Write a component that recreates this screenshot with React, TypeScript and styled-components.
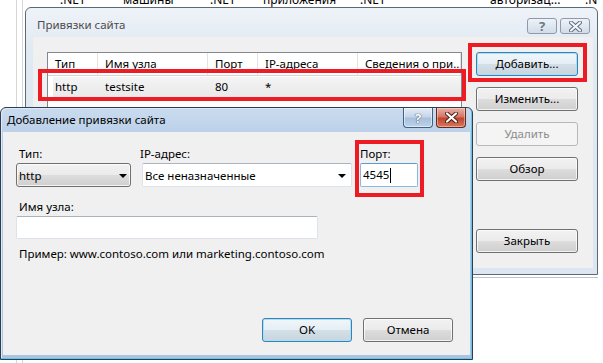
import styled, { createGlobalStyle, css } from 'styled-components';

const GlobalStyle = createGlobalStyle`
  html, body {
    margin: 0;
    padding: 0;
    background: #ffffff;
  }
  body {
    font-family: "Noto Sans", "Open Sans", sans-serif;
    font-size: 11.5px;
    color: #000000;
  }
`;

const Desktop = styled.div`
  position: relative;
  width: 603px;
  height: 363px;
  overflow: hidden;
  background: #ffffff;
  display: flex;
`;

const Gutter = styled.div<{ $w: number }>`
  width: ${p => p.$w}px;
  flex-shrink: 0;
  border-right: 1px solid #d6d6d6;
`;

const BackArea = styled.div`
  flex: 1;
`;

const BackRow = styled.div`
  display: flex;
  margin-top: -8px;
  padding-left: 37px;
  line-height: 16px;
  font-size: 12px;
  white-space: nowrap;
`;

const BackCell = styled.div<{ $w?: number }>`
  width: ${p => (p.$w ? `${p.$w}px` : 'auto')};
  flex-shrink: 0;
`;

const Window = styled.div<{ $x: number; $y: number; $w: number; $h: number; $active?: boolean }>`
  position: absolute;
  left: ${p => p.$x}px;
  top: ${p => p.$y}px;
  width: ${p => p.$w}px;
  height: ${p => p.$h}px;
  box-sizing: border-box;
  display: flex;
  flex-direction: column;
  border-radius: 6px 6px 0 0;
  ${p =>
    p.$active
      ? css`
          border: 1px solid #2d3d52;
          background: linear-gradient(#c9dbee, #b3cbe6 40px, #aac4e2);
          padding: 0 2px 4px 2px;
          box-shadow: inset -1px -1px 0 #62c6ea, inset 1px 1px 0 #dfeaf6;
        `
      : css`
          border: 1px solid #5d6877;
          background: linear-gradient(#eef3f8, #e1e9f2 40px, #dce6f1);
          padding: 0 4px 6px 7px;
          box-shadow: 0 2px 0 #ffffff, 0 3px 0 #bcc3cd;
        `}
`;

const TitleBar = styled.div<{ $active?: boolean }>`
  display: flex;
  align-items: flex-start;
  flex-shrink: 0;
  ${p =>
    p.$active
      ? css`
          height: 24px;
          padding: 0 4px 0 4px;
        `
      : css`
          height: 29px;
          padding: 0 3px 0 4px;
        `}
`;

const TitleText = styled.div<{ $active?: boolean }>`
  flex: 1;
  line-height: 16px;
  margin-top: ${p => (p.$active ? 4 : 9)}px;
  color: ${p => (p.$active ? '#000000' : '#4b4b4b')};
  white-space: nowrap;
`;

const Caption = styled.div<{ $active?: boolean }>`
  display: flex;
  gap: 3px;
  margin-top: ${p => (p.$active ? 0 : 10)}px;
`;

const CaptionButton = styled.div<{ $kind: 'help' | 'close'; $active?: boolean }>`
  box-sizing: border-box;
  width: 30px;
  height: ${p => (p.$active ? 20 : 16)}px;
  display: flex;
  align-items: center;
  justify-content: center;
  border-radius: ${p => (p.$active ? '0 0 4px 4px' : '3px')};
  font-weight: 700;
  font-size: 13px;
  ${p => {
    if (!p.$active) {
      return css`
        border: 1px solid #8d9aab;
        background: linear-gradient(#eef3f8, #dfe7f0 50%, #d3dde8);
        color: #6b7787;
      `;
    }
    if (p.$kind === 'close') {
      return css`
        border: 1px solid #5e2a22;
        border-top: none;
        background: linear-gradient(#e9b3a8, #d27866 45%, #c0462e 55%, #d9785f);
        box-shadow: inset 0 0 0 1px rgba(255, 220, 210, 0.5);
      `;
    }
    return css`
      border: 1px solid #43607f;
      border-top: none;
      background: linear-gradient(#e4edf7, #c5d6ea 45%, #a9c0dc 55%, #bcd3ec);
      box-shadow: inset 0 0 0 1px rgba(255, 255, 255, 0.5);
      color: #ffffff;
      text-shadow: 0 0 1px #2d4561, 0 0 1px #2d4561;
    `;
  }}
`;

const Client = styled.div<{ $dir: 'row' | 'column' }>`
  flex: 1;
  display: flex;
  flex-direction: ${p => p.$dir};
  background: #f0f0f0;
  min-height: 0;
`;

const BindingsBody = styled(Client)`
  padding: 15px 15px 15px 14px;
  gap: 14px;
`;

const ListView = styled.div`
  width: 415px;
  box-sizing: border-box;
  border: 1px solid #828790;
  background: #ffffff;
`;

const HeaderRow = styled.div`
  display: flex;
  height: 22px;
  border-bottom: 1px solid #d5d5d5;
`;

const HeaderCell = styled.div<{ $w?: number }>`
  width: ${p => (p.$w ? `${p.$w}px` : 'auto')};
  flex: ${p => (p.$w ? '0 0 auto' : '1')};
  box-sizing: border-box;
  padding: 2px 0 0 7px;
  line-height: 18px;
  border-right: 1px solid #e3e3e3;
  white-space: nowrap;
  overflow: hidden;
`;

const DataRow = styled.div`
  position: relative;
  display: flex;
  height: 20px;
  margin: 1px 0 0 5px;
  background: linear-gradient(#f4f4f4, #e9e9e9);

  &::after {
    content: '';
    position: absolute;
    top: -8px;
    left: -15px;
    right: -5px;
    bottom: -4px;
    border: 4px solid #ed1c24;
  }
`;

const DataCell = styled.div<{ $w: number; $pad?: number }>`
  width: ${p => p.$w}px;
  flex-shrink: 0;
  box-sizing: border-box;
  padding-left: ${p => p.$pad ?? 7}px;
  line-height: 20px;
`;

const SideButtons = styled.div`
  display: flex;
  flex-direction: column;
  gap: 11px;
`;

const Button = styled.button<{ $w?: number; $default?: boolean; $marked?: boolean; $push?: boolean }>`
  position: relative;
  width: ${p => p.$w ?? 102}px;
  height: 24px;
  flex-shrink: 0;
  box-sizing: border-box;
  padding: 0;
  border: 1px solid #707070;
  border-radius: 3px;
  background: linear-gradient(#f2f2f2 0%, #ebebeb 50%, #dddddd 50%, #cfcfcf 100%);
  box-shadow: inset 0 0 0 1px rgba(255, 255, 255, 0.75);
  font-family: inherit;
  font-size: 11.5px;
  color: #000000;
  line-height: 20px;
  ${p => p.$push && css`margin-top: auto;`}
  ${p =>
    p.$default &&
    css`
      border-color: #3c7fb1;
      background: linear-gradient(#f0f7fb 0%, #e5eef4 50%, #d4e0e8 50%, #c8d5de 100%);
      box-shadow: inset 0 0 0 1px #a6e1f8;
    `}
  ${p =>
    p.$marked &&
    css`
      &::after {
        content: '';
        position: absolute;
        top: -10px;
        left: -9px;
        right: -10px;
        bottom: -7px;
        border: 4px solid #ed1c24;
      }
    `}
  &:disabled {
    border-color: #b5b8bb;
    background: #f4f4f4;
    color: #8c8c8c;
    box-shadow: none;
  }
`;

const DialogBody = styled(Client)`
  padding: 14px 17px 13px 13px;
`;

const FieldsRow = styled.div`
  display: flex;
  align-items: flex-start;
`;

const Field = styled.div<{ $w: number; $gap?: number; $marked?: boolean }>`
  position: relative;
  width: ${p => p.$w}px;
  margin-left: ${p => p.$gap ?? 0}px;
  display: flex;
  flex-direction: column;
  ${p =>
    p.$marked &&
    css`
      &::after {
        content: '';
        position: absolute;
        top: -6px;
        left: -5px;
        right: -6px;
        bottom: -10px;
        border: 4px solid #ed1c24;
      }
    `}
`;

const Label = styled.div<{ $indent?: number }>`
  line-height: 16px;
  margin-left: ${p => p.$indent ?? 0}px;
  margin-bottom: 1px;
  white-space: nowrap;
`;

const DropButton = styled.div`
  height: 24px;
  box-sizing: border-box;
  display: flex;
  align-items: center;
  justify-content: space-between;
  padding: 0 3px 0 2px;
  border: 1px solid #707070;
  border-radius: 3px;
  background: linear-gradient(#f2f2f2 0%, #ebebeb 50%, #dddddd 50%, #cfcfcf 100%);
  box-shadow: inset 0 0 0 1px rgba(255, 255, 255, 0.75);
`;

const TextBox = styled.div<{ $h?: number; $focused?: boolean }>`
  height: ${p => p.$h ?? 24}px;
  box-sizing: border-box;
  display: flex;
  align-items: center;
  justify-content: space-between;
  padding: 0 5px 0 2px;
  background: #ffffff;
  border: 1px solid #dde3ea;
  border-top-color: #abb3bd;
  border-radius: 2px;
  white-space: nowrap;
  ${p =>
    p.$focused &&
    css`
      border-color: #87b9e6;
      border-top-color: #5a9bd5;
    `}
`;

const Caret = styled.span`
  display: inline-block;
  width: 1px;
  height: 15px;
  margin-left: 1px;
  background: #000000;
  vertical-align: middle;
`;

const Arrow = styled.span`
  width: 0;
  height: 0;
  border-left: 4px solid transparent;
  border-right: 4px solid transparent;
  border-top: 4px solid #000000;
  margin-top: 1px;
`;

const HostField = styled.div`
  margin-top: 12px;
  width: 302px;
  display: flex;
  flex-direction: column;
`;

const Hint = styled.div`
  margin-top: 7px;
  padding-left: 3px;
  line-height: 16px;
  white-space: nowrap;
`;

const DialogButtons = styled.div`
  margin-top: auto;
  display: flex;
  justify-content: flex-end;
  gap: 11px;
`;

function CloseGlyph({ active }: { active?: boolean }) {
  return (
    <svg width="13" height="11" viewBox="0 0 13 11">
      <path d="M2 1.5 L11 9.5 M11 1.5 L2 9.5" stroke={active ? '#4a1d14' : '#5b6878'} strokeWidth="4" strokeLinecap="round" />
      <path d="M2 1.5 L11 9.5 M11 1.5 L2 9.5" stroke={active ? '#ffffff' : '#f4f7fa'} strokeWidth="2.2" strokeLinecap="round" />
    </svg>
  );
}

export default function App() {
  return (
    <Desktop>
      <GlobalStyle />
      <Gutter $w={16} />
      <Gutter $w={5} />
      <BackArea>
        <BackRow>
          <BackCell $w={63}>.NET</BackCell>
          <BackCell $w={87}>машины</BackCell>
          <BackCell $w={53}>.NET</BackCell>
          <BackCell $w={97}>приложения</BackCell>
          <BackCell $w={130}>.NET</BackCell>
          <BackCell $w={95}>авторизац...</BackCell>
          <BackCell>.N</BackCell>
        </BackRow>
      </BackArea>

      <Window $x={25} $y={7} $w={573} $h={268}>
        <TitleBar>
          <TitleText>Привязки сайта</TitleText>
          <Caption>
            <CaptionButton $kind="help">?</CaptionButton>
            <CaptionButton $kind="close">
              <CloseGlyph />
            </CaptionButton>
          </Caption>
        </TitleBar>
        <BindingsBody $dir="row">
          <ListView>
            <HeaderRow>
              <HeaderCell $w={50}>Тип</HeaderCell>
              <HeaderCell $w={110}>Имя узла</HeaderCell>
              <HeaderCell $w={50}>Порт</HeaderCell>
              <HeaderCell $w={100}>IP-адреса</HeaderCell>
              <HeaderCell>Сведения о при...</HeaderCell>
            </HeaderRow>
            <DataRow>
              <DataCell $w={45} $pad={2}>http</DataCell>
              <DataCell $w={110}>testsite</DataCell>
              <DataCell $w={50}>80</DataCell>
              <DataCell $w={100}>*</DataCell>
            </DataRow>
          </ListView>
          <SideButtons>
            <Button $default $marked>Добавить...</Button>
            <Button>Изменить...</Button>
            <Button disabled>Удалить</Button>
            <Button>Обзор</Button>
            <Button $push>Закрыть</Button>
          </SideButtons>
        </BindingsBody>
      </Window>

      <Window $x={0} $y={107} $w={473} $h={253} $active>
        <TitleBar $active>
          <TitleText $active>Добавление привязки сайта</TitleText>
          <Caption $active>
            <CaptionButton $kind="help" $active>?</CaptionButton>
            <CaptionButton $kind="close" $active>
              <CloseGlyph active />
            </CaptionButton>
          </Caption>
        </TitleBar>
        <DialogBody $dir="column">
          <FieldsRow>
            <Field $w={115}>
              <Label $indent={3}>Тип:</Label>
              <DropButton>
                <span>http</span>
                <Arrow />
              </DropButton>
            </Field>
            <Field $w={210} $gap={11}>
              <Label $indent={-2}>IP-адрес:</Label>
              <TextBox>
                <span>Все неназначенные</span>
                <Arrow />
              </TextBox>
            </Field>
            <Field $w={58} $gap={8} $marked>
              <Label>Порт:</Label>
              <TextBox $focused>
                <span>
                  4545
                  <Caret />
                </span>
              </TextBox>
            </Field>
          </FieldsRow>
          <HostField>
            <Label $indent={3}>Имя узла:</Label>
            <TextBox $h={23} />
          </HostField>
          <Hint>Пример: www.contoso.com или marketing.contoso.com</Hint>
          <DialogButtons>
            <Button $w={90} $default>OK</Button>
            <Button $w={90}>Отмена</Button>
          </DialogButtons>
        </DialogBody>
      </Window>
    </Desktop>
  );
}
